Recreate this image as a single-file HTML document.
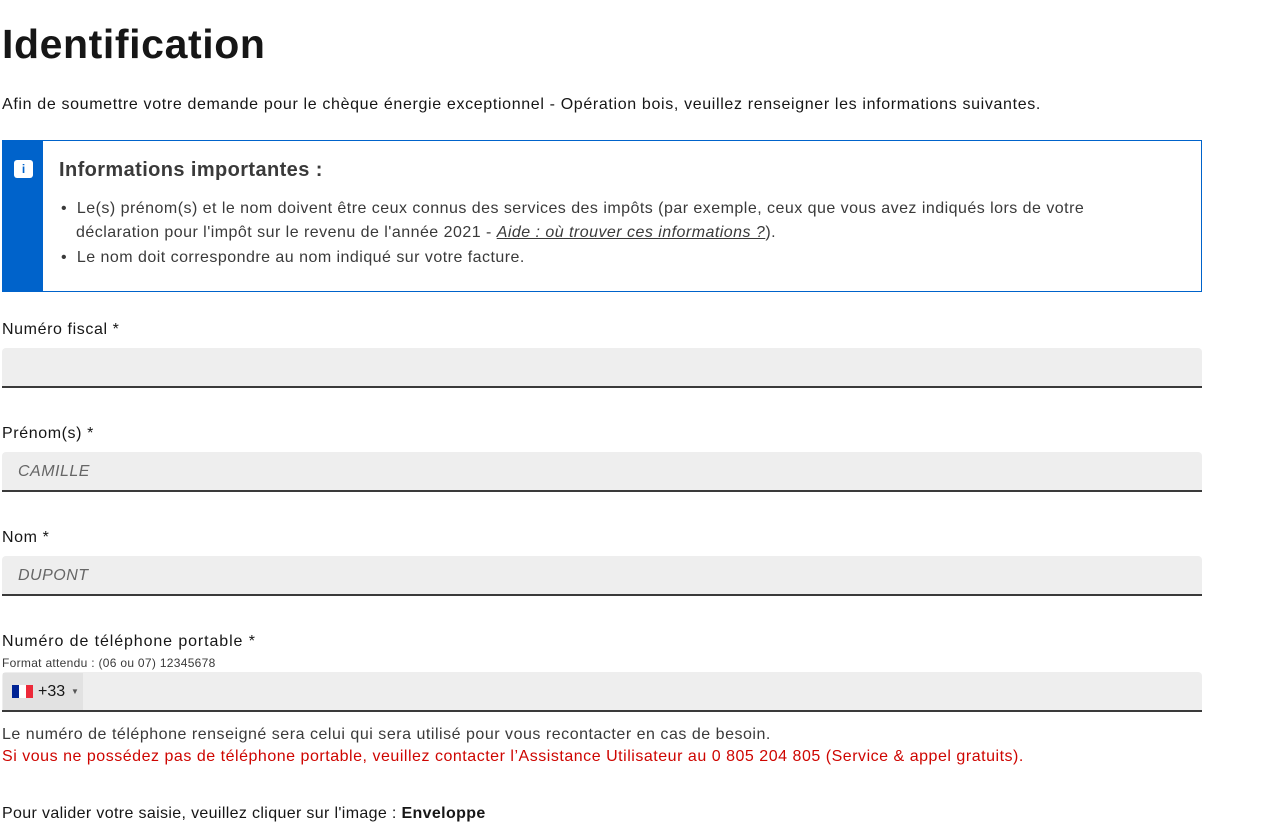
<!DOCTYPE html>
<html><head><meta charset="utf-8"><style>
*{box-sizing:border-box;margin:0;padding:0}
body{width:1282px;height:832px;background:#fff;font-family:"Liberation Sans",Arial,sans-serif;color:#161616;overflow:hidden;position:relative}
.a{position:absolute;white-space:nowrap}
h1{position:absolute;left:2px;top:21px;font-size:41px;font-weight:bold;letter-spacing:0.6px}
.p{font-size:16px;letter-spacing:0.65px}
.box{position:absolute;left:2px;top:140px;width:1200px;height:152px;border:1px solid #0063cb}
.bar{position:absolute;left:0;top:0;width:40px;height:150px;background:#0063cb}
.ic{position:absolute;left:11px;top:19px;width:19px;height:18px;background:#fff;border-radius:3px;color:#0063cb;font-size:12px;font-weight:bold;text-align:center;line-height:18px}
.inp{position:absolute;left:2px;width:1200px;height:40px;background:#eee;border-bottom:2px solid #3a3a3a;border-radius:4px 4px 0 0}
.ph{position:absolute;left:16px;top:11px;font-style:italic;color:#666;font-size:16px;letter-spacing:0.5px}
.lab{font-size:16px;letter-spacing:0.6px}
</style></head><body>
<h1>Identification</h1>
<div class="a p" style="left:2px;top:96px">Afin de soumettre votre demande pour le chèque énergie exceptionnel - Opération bois, veuillez renseigner les informations suivantes.</div>
<div class="box"><div class="bar"><div class="ic">i</div></div>
<div class="a" style="left:56px;top:18px;font-size:20px;font-weight:bold;color:#3a3a3a;letter-spacing:0.4px">Informations importantes :</div>
<div class="a p" style="left:58px;top:56px;line-height:24px;color:#3a3a3a;letter-spacing:0.47px">•&nbsp;&nbsp;Le(s) prénom(s) et le nom doivent être ceux connus des services des impôts (par exemple, ceux que vous avez indiqués lors de votre<br><span style="padding-left:15px"></span>déclaration pour l'impôt sur le revenu de l'année 2021 - <i style="text-decoration:underline">Aide : où trouver ces informations ?</i>).</div>
<div class="a p" style="left:58px;top:108px;color:#3a3a3a;letter-spacing:0.47px">•&nbsp;&nbsp;Le nom doit correspondre au nom indiqué sur votre facture.</div>
</div>
<div class="a lab" style="left:2px;top:321px">Numéro fiscal *</div>
<div class="inp" style="top:348px"></div>
<div class="a lab" style="left:2px;top:425px">Prénom(s) *</div>
<div class="inp" style="top:452px"><span class="ph">CAMILLE</span></div>
<div class="a lab" style="left:2px;top:529px">Nom *</div>
<div class="inp" style="top:556px"><span class="ph">DUPONT</span></div>
<div class="a lab" style="left:2px;top:633px;letter-spacing:0.9px">Numéro de téléphone portable *</div>
<div class="a" style="left:2px;top:656px;font-size:12px;color:#3a3a3a;letter-spacing:0.3px">Format attendu : (06 ou 07) 12345678</div>
<div class="inp" style="top:672px">
<div style="position:absolute;left:1px;top:1px;width:80px;height:37px;background:#e2e2e2">
<div style="position:absolute;left:9px;top:12px;width:21px;height:13px;display:flex"><span style="flex:1;background:#002395"></span><span style="flex:1;background:#fff"></span><span style="flex:1;background:#ed2939"></span></div>
<span style="position:absolute;left:35px;top:10px;font-size:16px">+33</span>
<span style="position:absolute;left:68px;top:14px;font-size:8px;color:#555">▼</span></div></div>
<div class="a p" style="left:2px;top:726px;color:#3a3a3a;letter-spacing:0.52px">Le numéro de téléphone renseigné sera celui qui sera utilisé pour vous recontacter en cas de besoin.</div>
<div class="a p" style="left:2px;top:748px;color:#ce0500;letter-spacing:0.52px">Si vous ne possédez pas de téléphone portable, veuillez contacter l’Assistance Utilisateur au 0 805 204 805 (Service &amp; appel gratuits).</div>
<div class="a p" style="left:2px;top:805px;letter-spacing:0.35px">Pour valider votre saisie, veuillez cliquer sur l'image : <b>Enveloppe</b></div>
</body></html>
